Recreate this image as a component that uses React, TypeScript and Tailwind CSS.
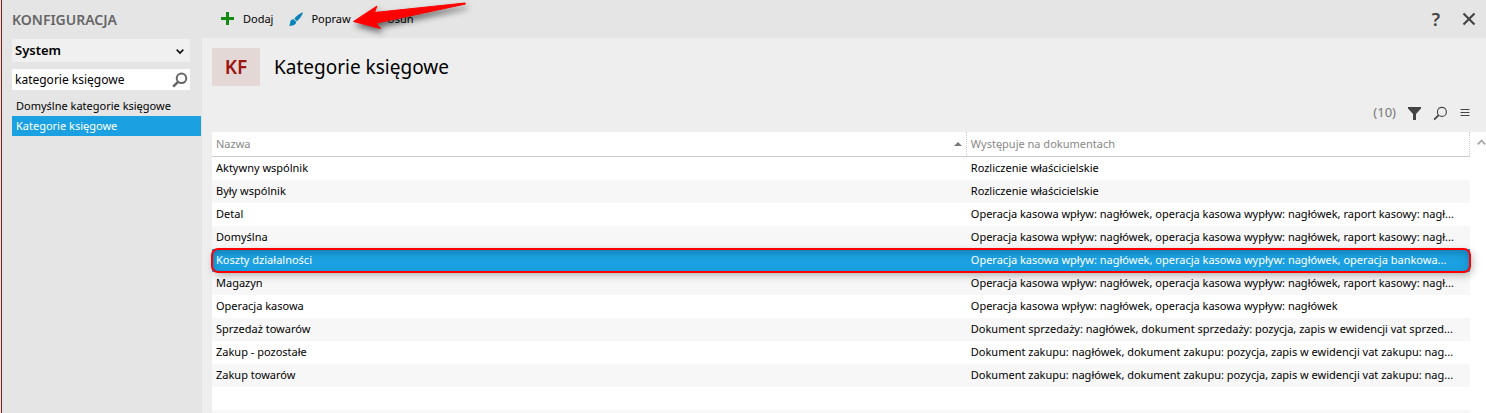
import { useState } from 'react';
import type { ReactNode } from 'react';
import clsx from 'clsx';

const OPERATION = 'Operacja kasowa wpływ: nagłówek, operacja kasowa wypływ: nagłówek';

const rows = [
  { name: 'Aktywny wspólnik', documents: 'Rozliczenie właścicielskie' },
  { name: 'Były wspólnik', documents: 'Rozliczenie właścicielskie' },
  { name: 'Detal', documents: `${OPERATION}, raport kasowy: nagł...` },
  { name: 'Domyślna', documents: `${OPERATION}, raport kasowy: nagł...` },
  { name: 'Koszty działalności', documents: `${OPERATION}, operacja bankowa...` },
  { name: 'Magazyn', documents: `${OPERATION}, raport kasowy: nagł...` },
  { name: 'Operacja kasowa', documents: OPERATION },
  { name: 'Sprzedaż towarów', documents: 'Dokument sprzedaży: nagłówek, dokument sprzedaży: pozycja, zapis w ewidencji vat sprzed...' },
  { name: 'Zakup - pozostałe', documents: 'Dokument zakupu: nagłówek, dokument zakupu: pozycja, zapis w ewidencji vat zakupu: nag...' },
  { name: 'Zakup towarów', documents: 'Dokument zakupu: nagłówek, dokument zakupu: pozycja, zapis w ewidencji vat zakupu: nag...' }
];

const sections = ['Domyślne kategorie księgowe', 'Kategorie księgowe'];

function SearchIcon({ className, strokeWidth = 2 }: { className?: string; strokeWidth?: number }) {
  return (
    <svg viewBox="0 0 16 16" className={className} fill="none" stroke="currentColor" strokeWidth={strokeWidth} aria-hidden="true">
      <circle cx="9.5" cy="6.3" r="4.8" />
      <path d="M6 9.8 1.2 14.6" strokeWidth={strokeWidth + 0.6} />
    </svg>
  );
}

function ToolbarButton({ icon, children }: { icon: ReactNode; children: ReactNode }) {
  return (
    <button type="button" className="flex items-center gap-2 text-black">
      {icon}
      {children}
    </button>
  );
}

function PlusIcon() {
  return (
    <svg viewBox="0 0 14 14" className="size-3.5" fill="#138a13" aria-hidden="true">
      <path d="M5 0h3v5h5v3H8v5H5V8H0V5h5z" />
    </svg>
  );
}

function BrushIcon() {
  return (
    <svg viewBox="0 0 14 14" className="size-3.5" fill="#0a84b8" aria-hidden="true">
      <path d="M13.8 0.2C11 1 7.400 3.800 5.300 6.700l2.600 2.500C10.700 7 13.500 3.200 13.800 0.200z" />
      <path d="M4.600 7.300C2.700 7.200 1.300 8.400 1.200 10.300 1.100 12 0.700 12.900 0 13.500c3.400 0.600 7-0.300 7.300-3.700z" />
    </svg>
  );
}

function PointerArrow() {
  return (
    <svg
      viewBox="0 0 120 38"
      className="pointer-events-none absolute top-0 left-32 h-[38px] w-[120px] drop-shadow-[2px_4px_3px_rgba(0,0,0,0.55)]"
      aria-hidden="true"
    >
      <path d="M4.500 21.500 28 6 25.500 12.500 116 3 116.500 4 27 23.200 31.500 28.500z" fill="#ff0000" stroke="#ff0000" strokeLinejoin="round" />
    </svg>
  );
}

function Sidebar({ active, onSelect }: { active: string; onSelect: (name: string) => void }) {
  return (
    <aside className="flex w-[200px] shrink-0 flex-col border-l border-[#8b1a10] bg-[#e5e5e5] pl-2.5">
      <h1 className="flex h-[39px] items-center text-[14px] font-semibold text-[#666]">KONFIGURACJA</h1>
      <div className="relative mr-[11px]">
        <select aria-label="Obszar" className="block h-[23px] w-full appearance-none bg-[#f0f0f0] px-[3px] text-[13px] font-semibold text-black">
          <option>System</option>
        </select>
        <svg viewBox="0 0 8 6" className="pointer-events-none absolute top-2.5 right-1.5 h-1.5 w-2" fill="none" stroke="#111" strokeWidth="1.700" aria-hidden="true">
          <path d="M0.700 0.700 4 4l3.300-3.300" />
        </svg>
      </div>
      <div className="mt-[7px] mr-[11px] flex h-[21px] items-center bg-white">
        <input aria-label="Szukaj" defaultValue="kategorie księgowe" className="min-w-0 flex-1 px-[3px] text-[12px] text-black outline-none" />
        <button type="button" aria-label="Szukaj" className="mr-0.5 text-[#666]">
          <SearchIcon className="size-4" />
        </button>
      </div>
      <nav className="mt-1.5 flex flex-col">
        {sections.map((name) => (
          <button
            key={name}
            type="button"
            onClick={() => onSelect(name)}
            className={clsx('h-5 px-1 text-left whitespace-nowrap', name === active ? 'bg-[#1ba1e2] text-white' : 'text-black')}
          >
            {name}
          </button>
        ))}
      </nav>
    </aside>
  );
}

function CategoryTable() {
  const [selected, setSelected] = useState('Koszty działalności');
  return (
    <table className="w-full table-fixed border-separate border-spacing-0">
      <colgroup>
        <col className="w-[60%]" />
        <col className="w-[40%]" />
      </colgroup>
      <thead>
        <tr className="h-[25px] text-left text-[#888]">
          <th className="border-b border-[#ccc] p-0 font-normal">
            <span className="flex h-6 items-center justify-between border-r border-dotted border-[#ccc] px-1">
              Nazwa
              <svg viewBox="0 0 8 4" className="h-1 w-2" fill="#777" aria-hidden="true">
                <path d="M0 4 4 0l4 4z" />
              </svg>
            </span>
          </th>
          <th className="border-b border-[#ccc] p-0 font-normal">
            <span className="flex h-6 items-center border-r border-dotted border-[#ccc] px-1">Występuje na dokumentach</span>
          </th>
        </tr>
      </thead>
      <tbody>
        {rows.map((row) => (
          <tr
            key={row.name}
            onClick={() => setSelected(row.name)}
            className={clsx(
              'h-[23px]',
              row.name === selected
                ? 'relative rounded-md bg-[#1ba1e2] text-white shadow-[inset_0_3px_8px_rgba(0,0,0,0.25),2px_3px_8px_rgba(0,0,0,0.3)] outline-2 -outline-offset-1 outline-[#f00]'
                : 'text-black even:bg-[#f7f7f7]'
            )}
          >
            <td className="truncate px-1 py-0">{row.name}</td>
            <td className="overflow-hidden px-1 py-0 whitespace-nowrap">{row.documents}</td>
          </tr>
        ))}
        <tr className="h-[23px]">
          <td colSpan={2} className="p-0" />
        </tr>
        <tr className="h-[23px] bg-[#f7f7f7]">
          <td colSpan={2} className="p-0" />
        </tr>
      </tbody>
    </table>
  );
}

export default function App() {
  const [section, setSection] = useState('Kategorie księgowe');
  return (
    <div className="flex h-screen overflow-hidden bg-[#e5e5e5] pl-px font-['Noto_Sans','Open_Sans',sans-serif] text-[11px]">
      <Sidebar active={section} onSelect={setSection} />
      <div className="flex min-w-0 flex-1 flex-col">
        <header className="flex h-[38px] shrink-0 items-center justify-between pr-2.5 pl-5">
          <div className="relative flex h-full items-center gap-4">
            <ToolbarButton icon={<PlusIcon />}>Dodaj</ToolbarButton>
            <ToolbarButton icon={<BrushIcon />}>Popraw</ToolbarButton>
            <ToolbarButton icon={<span className="w-3" />}>Usuń</ToolbarButton>
            <PointerArrow />
          </div>
          <div className="flex items-center gap-[22px] text-[#444]">
            <button type="button" aria-label="Pomoc" className="text-lg font-semibold">?</button>
            <button type="button" aria-label="Zamknij">
              <svg viewBox="0 0 14 14" className="size-3.5" fill="none" stroke="currentColor" strokeWidth="2.200" aria-hidden="true">
                <path d="m1.500 1.500 11 11m0-11-11 11" />
              </svg>
            </button>
          </div>
        </header>
        <main className="ml-px flex min-h-0 flex-1 flex-col bg-[#eee] pl-2.5">
          <div className="flex items-center gap-3.5 pt-2.5">
            <span className="grid h-[38px] w-12 place-items-center bg-[#e4d8d6] text-[19px] leading-6 font-semibold text-[#9b1610]">KF</span>
            <h2 className="text-[19px] leading-6 text-black">Kategorie księgowe</h2>
          </div>
          <div className="flex h-[46px] shrink-0 items-center justify-end gap-3 pt-2 pr-4 text-[#444]">
            <span className="text-[13px] text-[#777]">(10)</span>
            <button type="button" aria-label="Filtruj">
              <svg viewBox="0 0 13 13" className="size-[13px]" fill="currentColor" aria-hidden="true">
                <path d="M0 0h13v1.500L8 7v6H5V7L0 1.500z" />
              </svg>
            </button>
            <button type="button" aria-label="Wyszukaj">
              <SearchIcon className="size-[15px]" strokeWidth={1.2} />
            </button>
            <button type="button" aria-label="Menu">
              <svg viewBox="0 0 10 8" className="h-2 w-2.5" fill="none" stroke="currentColor" aria-hidden="true">
                <path d="M0.500 0.500h9M0.500 3.500h9M0.500 6.500h9" />
              </svg>
            </button>
          </div>
          <div className="flex min-h-0 flex-1 bg-white">
            <div className="min-w-0 flex-1">
              <CategoryTable />
            </div>
            <button type="button" aria-label="Przewiń w górę" className="flex h-5 w-4 shrink-0 items-center justify-end text-[#aaa]">
              <svg viewBox="0 0 9 6" className="h-1.5 w-[9px]" fill="none" stroke="currentColor" strokeWidth="1.800" aria-hidden="true">
                <path d="M0.700 5.300 4.500 1.500l3.800 3.800" />
              </svg>
            </button>
          </div>
        </main>
      </div>
    </div>
  );
}
